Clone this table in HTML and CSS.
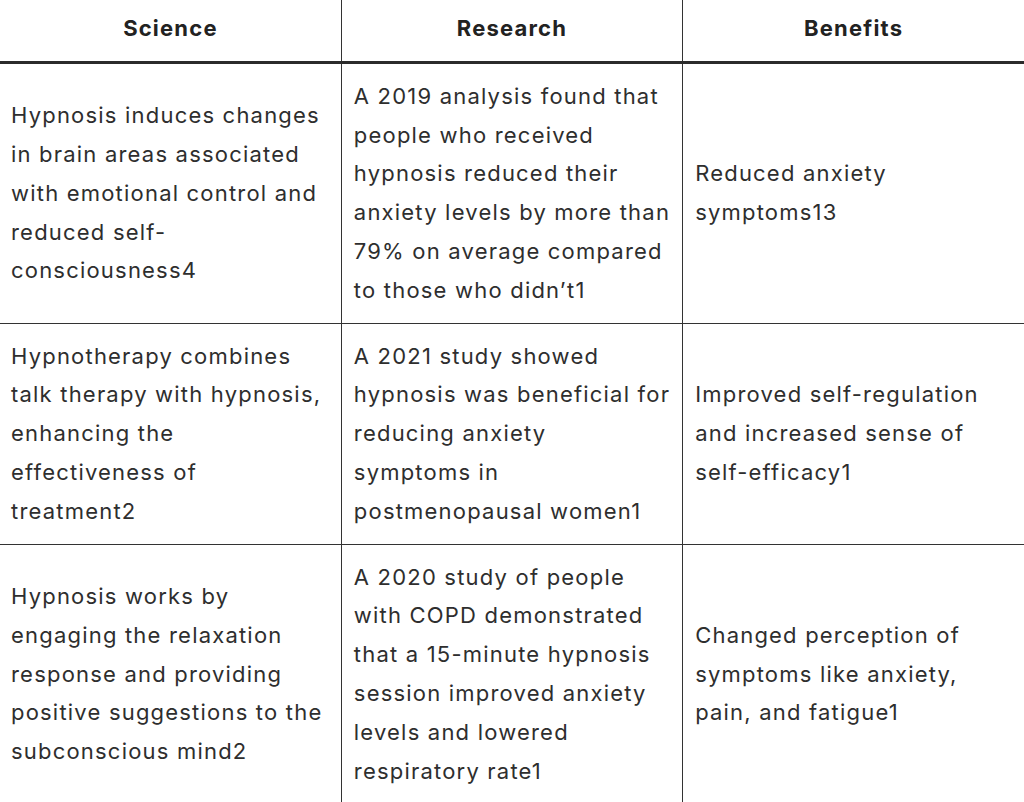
FILE: index.html
```html
<!DOCTYPE html>
<html>
<head>
<meta charset="utf-8">
<link rel="stylesheet" href="styles.css">
</head>
<body>
<table class="tbl">
  <colgroup><col class="c"><col class="c"><col class="c"></colgroup>
  <thead>
    <tr><th>Science</th><th>Research</th><th>Benefits</th></tr>
  </thead>
  <tbody>
    <tr>
      <td>Hypnosis induces changes in brain areas associated with emotional control and reduced self-consciousness4</td>
      <td>A 2019 analysis found that people who received hypnosis reduced their anxiety levels by more than 79% on average compared to those who didn’t1</td>
      <td>Reduced anxiety symptoms13</td>
    </tr>
    <tr>
      <td>Hypnotherapy combines talk therapy with hypnosis, enhancing the effectiveness of treatment2</td>
      <td>A 2021 study showed hypnosis was beneficial for reducing anxiety symptoms in postmenopausal women1</td>
      <td>Improved self-regulation and increased sense of self-efficacy1</td>
    </tr>
    <tr>
      <td>Hypnosis works by engaging the relaxation response and providing positive suggestions to the subconscious mind2</td>
      <td>A 2020 study of people with COPD demonstrated that a 15-minute hypnosis session improved anxiety levels and lowered respiratory rate1</td>
      <td>Changed perception of symptoms like anxiety, pain, and fatigue1</td>
    </tr>
  </tbody>
</table>
</body>
</html>
```
FILE: styles.css
```css
html, body {
  margin: 0;
  padding: 0;
  background: #fff;
}
body {
  font-family: Inter, "Noto Sans", sans-serif;
  color: #2e2e2e;
}
.tbl {
  width: 1024px;
  table-layout: fixed;
  border-collapse: collapse;
  font-size: 22px;
  letter-spacing: 1.2px;
  line-height: 38.8px;
}
.tbl th {
  font-weight: 700;
  color: #222;
  text-align: center;
  padding: 9px 12px 13px;
  border-bottom: 3px solid #2b2b2b;
}
.tbl td {
  vertical-align: middle;
  padding: 13px 12px 13px 11px;
  border-top: 1px solid #333;
}
.tbl th + th, .tbl td + td {
  border-left: 1px solid #333;
}
.tbl td + td {
  padding-left: 12px;
}
```
